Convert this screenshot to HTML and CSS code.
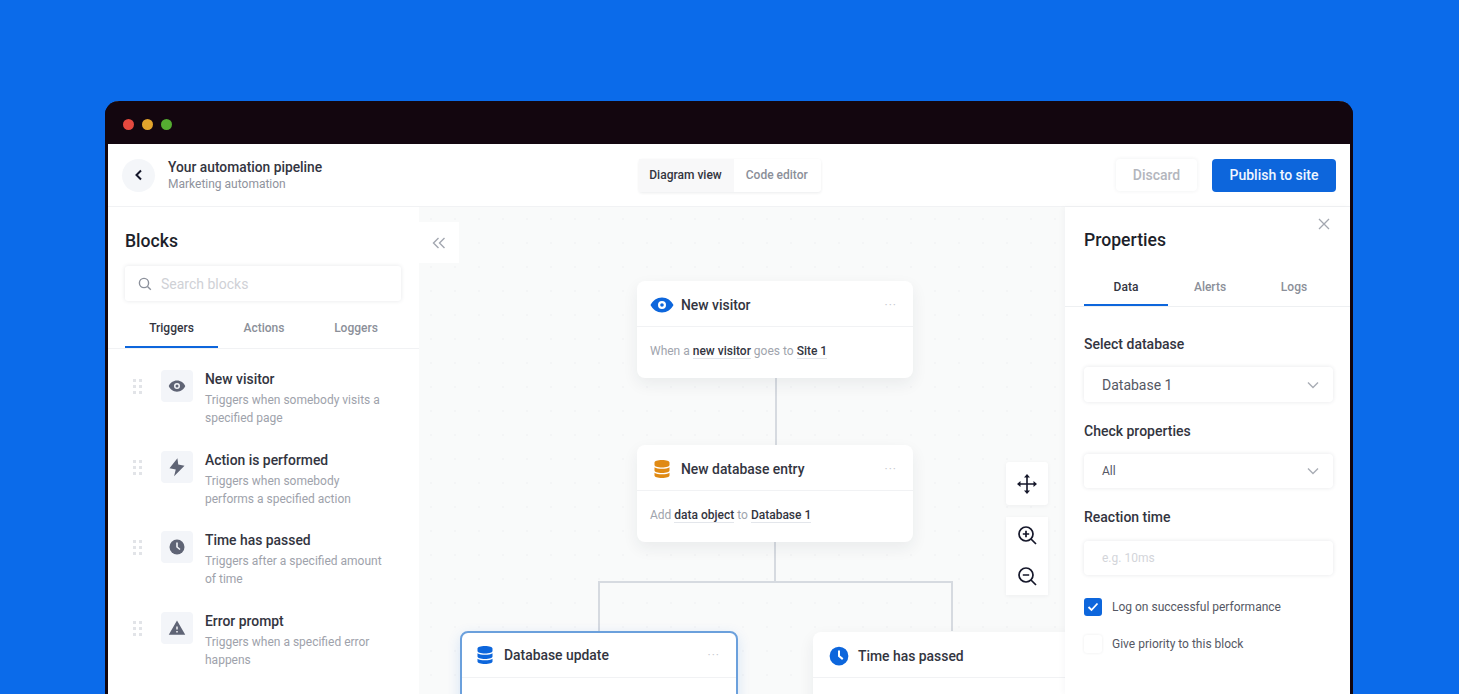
FILE: index.html
```html
<!DOCTYPE html>
<html lang="en">
<head>
    <meta charset="UTF-8">
    <meta name="viewport" content="width=device-width, initial-scale=1.0">
    <title>Your automation pipeline</title>
    <link rel="stylesheet" href="styles.css">
</head>
<body>
    <div class="window">
        <div class="titlebar">
            <span class="light light-red"></span>
            <span class="light light-yellow"></span>
            <span class="light light-green"></span>
        </div>

        <header class="topbar">
            <div class="topbar-left">
                <button class="back-btn" type="button">
                    <svg width="14" height="14" viewBox="0 0 14 14"><path d="M9 2.5 4.5 7 9 11.5" fill="none" stroke="#15172a" stroke-width="2"/></svg>
                </button>
                <div>
                    <div class="pipeline-name">Your automation pipeline</div>
                    <div class="pipeline-sub">Marketing automation</div>
                </div>
            </div>
            <div class="view-switch">
                <span class="view-tab view-tab-active">Diagram view</span>
                <span class="view-tab">Code editor</span>
            </div>
            <div class="topbar-right">
                <button class="btn-discard" type="button">Discard</button>
                <button class="btn-publish" type="button">Publish to site</button>
            </div>
        </header>

        <div class="main">
            <aside class="sidebar">
                <h2 class="panel-title">Blocks</h2>
                <div class="search">
                    <svg width="14" height="14" viewBox="0 0 14 14"><circle cx="6" cy="6" r="4.6" fill="none" stroke="#8b909b" stroke-width="1.4"/><path d="m9.5 9.5 3.3 3.3" stroke="#8b909b" stroke-width="1.4"/></svg>
                    <span>Search blocks</span>
                </div>
                <div class="tabs sidebar-tabs">
                    <span class="tab tab-active">Triggers</span>
                    <span class="tab">Actions</span>
                    <span class="tab">Loggers</span>
                </div>
                <div class="block-list">
                    <div class="block-item">
                        <div class="drag"><i></i><i></i><i></i><i></i><i></i><i></i></div>
                        <div class="block-icon">
                            <svg width="18" height="18" viewBox="0 0 24 24"><path fill-rule="evenodd" fill="#5f6475" d="M12 4.5C7 4.5 2.7 7.6 1 12c1.700 4.400 6 7.500 11 7.500s9.300-3.100 11-7.500c-1.700-4.400-6-7.500-11-7.500zM12 8a4 4 0 1 1 0 8 4 4 0 0 1 0-8zm0 2a2 2 0 1 0 0 4 2 2 0 0 0 0-4z"/></svg>
                        </div>
                        <div>
                            <div class="block-name">New visitor</div>
                            <div class="block-desc">Triggers when somebody visits a specified page</div>
                        </div>
                    </div>
                    <div class="block-item">
                        <div class="drag"><i></i><i></i><i></i><i></i><i></i><i></i></div>
                        <div class="block-icon">
                            <svg width="20" height="20" viewBox="0 0 24 24"><path fill="#5f6475" d="M12.500 1.500 3 13.500l7.500 1.500-2 8L21 10.500 13.500 9z"/></svg>
                        </div>
                        <div>
                            <div class="block-name">Action is performed</div>
                            <div class="block-desc">Triggers when somebody performs a specified action</div>
                        </div>
                    </div>
                    <div class="block-item">
                        <div class="drag"><i></i><i></i><i></i><i></i><i></i><i></i></div>
                        <div class="block-icon">
                            <svg width="16" height="16" viewBox="0 0 16 16"><circle cx="8" cy="8" r="7.500" fill="#5f6475"/><path d="M8 3.500V8l3 2.500" fill="none" stroke="#f3f5f9" stroke-width="1.600"/></svg>
                        </div>
                        <div>
                            <div class="block-name">Time has passed</div>
                            <div class="block-desc">Triggers after a specified amount of time</div>
                        </div>
                    </div>
                    <div class="block-item">
                        <div class="drag"><i></i><i></i><i></i><i></i><i></i><i></i></div>
                        <div class="block-icon">
                            <svg width="18" height="18" viewBox="0 0 24 24"><path fill="#5f6475" d="M1 21h22L12 2 1 21zm12-3h-2v-2h2v2zm0-4h-2v-4h2v4z"/></svg>
                        </div>
                        <div>
                            <div class="block-name">Error prompt</div>
                            <div class="block-desc">Triggers when a specified error happens</div>
                        </div>
                    </div>
                </div>
            </aside>

            <section class="canvas">
                <button class="collapse-btn" type="button">
                    <svg width="14" height="12" viewBox="0 0 14 12"><path d="M6.500 1 1.500 6l5 5M12.500 1l-5 5 5 5" fill="none" stroke="#a3a7b0" stroke-width="1.400"/></svg>
                </button>

                <svg class="wires" width="646" height="487">
                    <path d="M357 170V238M356 335V375M180 424V375H533V424" fill="none" stroke="#d6dae0" stroke-width="2"/>
                </svg>

                <div class="node node-visitor">
                    <div class="node-head">
                        <svg width="24" height="24" viewBox="0 0 24 24"><path fill-rule="evenodd" fill="#0d66dc" d="M12 4.500C7 4.500 2.700 7.600.5 12c2.200 4.400 6.500 7.500 11.500 7.500s9.300-3.100 11.500-7.500C21.300 7.600 17 4.500 12 4.500zM12 8a4 4 0 1 1 0 8 4 4 0 0 1 0-8zm0 2.200a1.800 1.800 0 1 0 0 3.600 1.800 1.800 0 0 0 0-3.600z"/></svg>
                        <span class="node-name">New visitor</span>
                        <span class="node-more">&middot;&middot;&middot;</span>
                    </div>
                    <div class="node-body">When a <b>new visitor</b> goes to <b>Site 1</b></div>
                </div>

                <div class="node node-entry">
                    <div class="node-head">
                        <svg width="24" height="24" viewBox="0 0 24 24"><path fill="#e08a14" d="M12 3c4.400 0 7.500 1.100 7.500 2.600V8c0 1.500-3.100 2.500-7.500 2.500S4.500 9.500 4.500 8V5.600C4.500 4.100 7.600 3 12 3zM4.500 10.300c1.700 1 4.300 1.500 7.500 1.500s5.800-.5 7.500-1.500v3.200c0 1.500-3.100 2.500-7.500 2.500s-7.500-1-7.500-2.500zM4.500 15.800c1.700 1 4.300 1.500 7.500 1.500s5.800-.5 7.500-1.500v2.700c0 1.500-3.100 2.500-7.500 2.500s-7.500-1-7.500-2.500z"/></svg>
                        <span class="node-name">New database entry</span>
                        <span class="node-more">&middot;&middot;&middot;</span>
                    </div>
                    <div class="node-body">Add <b>data object</b> to <b>Database 1</b></div>
                </div>

                <div class="node node-update">
                    <div class="node-head">
                        <svg width="24" height="24" viewBox="0 0 24 24"><path fill="#0d66dc" d="M12 3c4.400 0 7.500 1.100 7.500 2.600V8c0 1.500-3.100 2.500-7.500 2.500S4.500 9.500 4.500 8V5.600C4.500 4.100 7.600 3 12 3zM4.500 10.300c1.700 1 4.300 1.500 7.500 1.500s5.800-.5 7.500-1.500v3.200c0 1.500-3.100 2.500-7.500 2.500s-7.500-1-7.500-2.500zM4.500 15.800c1.700 1 4.300 1.500 7.500 1.500s5.800-.5 7.500-1.500v2.700c0 1.500-3.100 2.500-7.500 2.500s-7.500-1-7.500-2.500z"/></svg>
                        <span class="node-name">Database update</span>
                        <span class="node-more">&middot;&middot;&middot;</span>
                    </div>
                </div>

                <div class="node node-time">
                    <div class="node-head">
                        <svg width="20" height="20" viewBox="0 0 16 16"><circle cx="8" cy="8" r="7.500" fill="#0d66dc"/><path d="M8 3.500V8l3 2.500" fill="none" stroke="#fff" stroke-width="1.600"/></svg>
                        <span class="node-name">Time has passed</span>
                    </div>
                </div>

                <button class="tool-btn tool-move" type="button">
                    <svg width="22" height="22" viewBox="0 0 22 22"><path d="M11 3v16M3 11h16" stroke="#15172a" stroke-width="1.600"/><path fill="#15172a" d="m11 1 3 3.500H8zM11 21l-3-3.500h6zM1 11l3.500-3v6zM21 11l-3.500 3V8z"/></svg>
                </button>
                <div class="tool-group">
                    <button class="tool-btn" type="button">
                        <svg width="22" height="22" viewBox="0 0 22 22"><circle cx="10" cy="10" r="7" fill="none" stroke="#15172a" stroke-width="1.700"/><path d="m15 15 5 5M10 6.800v6.400M6.800 10h6.400" stroke="#15172a" stroke-width="1.700"/></svg>
                    </button>
                    <button class="tool-btn" type="button">
                        <svg width="22" height="22" viewBox="0 0 22 22"><circle cx="10" cy="10" r="7" fill="none" stroke="#15172a" stroke-width="1.700"/><path d="m15 15 5 5M6.800 10h6.400" stroke="#15172a" stroke-width="1.700"/></svg>
                    </button>
                </div>
            </section>

            <aside class="properties">
                <div class="close">
                    <svg width="12" height="12" viewBox="0 0 12 12"><path d="m1 1 10 10M11 1 1 11" stroke="#a3a7b0" stroke-width="1.300"/></svg>
                </div>
                <h2 class="panel-title">Properties</h2>
                <div class="tabs properties-tabs">
                    <span class="tab tab-active">Data</span>
                    <span class="tab">Alerts</span>
                    <span class="tab">Logs</span>
                </div>
                <div class="form">
                    <div class="field-label">Select database</div>
                    <div class="select select-large">
                        <span>Database 1</span>
                        <svg width="12" height="8" viewBox="0 0 12 8"><path d="m1 1.500 5 5 5-5" fill="none" stroke="#a9adb5" stroke-width="1.400"/></svg>
                    </div>
                    <div class="field-label">Check properties</div>
                    <div class="select">
                        <span>All</span>
                        <svg width="12" height="8" viewBox="0 0 12 8"><path d="m1 1.500 5 5 5-5" fill="none" stroke="#a9adb5" stroke-width="1.400"/></svg>
                    </div>
                    <div class="field-label">Reaction time</div>
                    <div class="select placeholder"><span>e.g. 10ms</span></div>
                    <div class="check check-first">
                        <span class="box box-on">
                            <svg width="12" height="10" viewBox="0 0 12 10"><path d="m1.500 5 3 3 6-6.500" fill="none" stroke="#fff" stroke-width="1.800"/></svg>
                        </span>
                        Log on successful performance
                    </div>
                    <div class="check">
                        <span class="box"></span>
                        Give priority to this block
                    </div>
                </div>
            </aside>
        </div>
    </div>
</body>
</html>
```

FILE: styles.css
```css
html, body {
    height: 694px;
    overflow: hidden;
}
body {
    margin: 0;
    background-color: #0b6bea;
    font-family: Roboto, "Liberation Sans", sans-serif;
    color: #1d1f2b;
}
button {
    font-family: inherit;
    border: none;
    padding: 0;
    cursor: pointer;
}
.window {
    width: 1248px;
    height: 593px;
    margin: 101px 0 0 105px;
    box-sizing: border-box;
    border: 3px solid #13060f;
    border-top: none;
    border-bottom: none;
    border-radius: 14px 14px 0 0;
    background-color: #fff;
}

/* title bar */
.titlebar {
    height: 43px;
    box-sizing: border-box;
    margin: 0 -3px;
    padding: 3px 0 0 18px;
    display: flex;
    align-items: center;
    gap: 8px;
    background-color: #13060f;
    border-radius: 14px 14px 0 0;
}
.light {
    width: 11px;
    height: 11px;
    border-radius: 50%;
}
.light-red { background-color: #e5493f; }
.light-yellow { background-color: #e3a42c; }
.light-green { background-color: #55ac31; }

/* top bar */
.topbar {
    height: 62px;
    padding: 0 14px;
    display: grid;
    grid-template-columns: 1fr auto 1fr;
    align-items: center;
    border-bottom: 1px solid #f1f2f4;
}
.topbar-left {
    display: flex;
    align-items: center;
    gap: 13px;
}
.back-btn {
    width: 33px;
    height: 33px;
    border-radius: 50%;
    background-color: #f4f6f9;
    display: flex;
    align-items: center;
    justify-content: center;
}
.pipeline-name {
    font-size: 13.8px;
    font-weight: 500;
    line-height: 18px;
    color: #33353f;
}
.pipeline-sub {
    font-size: 12px;
    line-height: 16px;
    color: #8f939d;
}
.view-switch {
    display: flex;
    height: 33px;
    margin-left: 2px;
    box-shadow: 0 1px 3px rgba(30, 40, 60, 0.09);
    border-radius: 3px;
}
.view-tab {
    padding: 0 13px 0 12px;
    font-size: 12px;
    font-weight: 500;
    line-height: 33px;
    color: #8b8f99;
}
.view-tab-active {
    padding: 0 12px 0 10px;
    background-color: #f8f8f9;
    color: #33353f;
}
.topbar-right {
    display: flex;
    justify-content: flex-end;
    gap: 15px;
}
.btn-discard {
    width: 81px;
    height: 32px;
    background-color: #fff;
    color: #b3b6bd;
    font-size: 14px;
    font-weight: 500;
    border-radius: 4px;
    box-shadow: 0 0 4px rgba(30, 40, 60, 0.07);
}
.btn-publish {
    width: 124px;
    height: 33px;
    background-color: #0d66dc;
    color: #f0f6ff;
    font-size: 14px;
    font-weight: 500;
    border-radius: 4px;
}

/* three columns */
.main {
    display: flex;
    height: 487px;
}
.panel-title {
    margin: 0;
    font-size: 17.6px;
    font-weight: 500;
    line-height: 24px;
}
.tabs {
    display: flex;
}
.tab {
    font-size: 12px;
    font-weight: 500;
    text-align: center;
    color: #8b8f99;
}
.tab-active {
    color: #33353f;
    border-bottom: 2px solid #0d66dc;
}

/* blocks */
.sidebar {
    width: 311px;
    flex-shrink: 0;
    box-sizing: border-box;
    padding-top: 22px;
}
.sidebar .panel-title {
    margin-left: 17px;
}
.search {
    width: 276px;
    height: 35px;
    margin: 13px 0 0 17px;
    box-sizing: border-box;
    padding-left: 13px;
    display: flex;
    align-items: center;
    gap: 9px;
    font-size: 14px;
    color: #cfd1d6;
    border-radius: 3px;
    box-shadow: 0 0 4px rgba(30, 40, 60, 0.11);
}
.sidebar-tabs {
    margin-top: 19px;
    padding-left: 17px;
    border-bottom: 1px solid #f1f2f4;
}
.sidebar-tabs .tab {
    width: 92px;
    line-height: 17px;
    padding-bottom: 9px;
}
.sidebar-tabs .tab-active {
    width: 93px;
}
.block-list {
    padding: 21px 0 0 25px;
}
.block-item {
    display: flex;
    align-items: flex-start;
    height: 80.67px;
}
.drag {
    width: 9px;
    margin: 9px 19px 0 0;
    display: grid;
    grid-template-columns: 3px 3px;
    gap: 3px;
    justify-content: space-between;
}
.drag i {
    height: 3px;
    background-color: #e2e4e8;
}
.block-icon {
    width: 32px;
    height: 32px;
    flex-shrink: 0;
    margin-right: 12px;
    display: flex;
    align-items: center;
    justify-content: center;
    background-color: #f3f5f9;
    border-radius: 4px;
}
.block-name {
    font-size: 13.9px;
    font-weight: 500;
    line-height: 18px;
    color: #33353f;
}
.block-desc {
    width: 180px;
    margin-top: 3px;
    font-size: 12px;
    line-height: 18px;
    color: #9ea2ab;
}

/* diagram */
.canvas {
    position: relative;
    flex: 1;
    overflow: hidden;
    background-color: #f9fafa;
    background-image: radial-gradient(#f4f5f6 1px, transparent 1px);
    background-size: 24px 24px;
}
.collapse-btn {
    position: absolute;
    left: 0;
    top: 15px;
    width: 40px;
    height: 41px;
    background-color: #fff;
    display: flex;
    align-items: center;
    justify-content: center;
}
.wires {
    position: absolute;
    left: 0;
    top: 0;
}
.node {
    position: absolute;
    box-sizing: border-box;
    width: 276px;
    background-color: #fff;
    border-radius: 8px;
    box-shadow: 0 6px 16px rgba(30, 40, 60, 0.07);
}
.node-visitor { left: 218px; top: 74px; }
.node-entry { left: 218px; top: 238px; }
.node-update {
    left: 41px;
    top: 424px;
    width: 278px;
    height: 120px;
    border: 2px solid #6ba0dc;
    box-shadow: 0 4px 14px rgba(13, 102, 220, 0.14);
}
.node-time { left: 394px; top: 425px; height: 120px; }
.node-head {
    height: 46px;
    box-sizing: border-box;
    padding: 3px 16px 0 13px;
    display: flex;
    align-items: center;
    gap: 7px;
    border-bottom: 1px solid #f1f2f4;
}
.node-update .node-head { height: 45px; padding: 0 16px 0 11px; }
.node-time .node-head { padding: 2px 16px 0 16px; gap: 9px; }
.node-name {
    flex: 1;
    font-size: 13.9px;
    font-weight: 500;
    color: #33353f;
}
.node-more {
    font-size: 12px;
    letter-spacing: 1px;
    color: #c9cbd1;
}
.node-body {
    padding: 0 13px;
    height: 51px;
    font-size: 12px;
    line-height: 48px;
    color: #a0a4ad;
}
.node-body b {
    font-weight: 500;
    color: #33353f;
    border-bottom: 1px solid #e3e6eb;
}
.tool-btn {
    width: 42px;
    height: 39px;
    background-color: #fff;
    display: flex;
    align-items: center;
    justify-content: center;
}
.tool-group .tool-btn:first-child {
    padding-bottom: 3px;
}
.tool-move {
    position: absolute;
    left: 587px;
    top: 255px;
    height: 43px;
    border-radius: 3px;
    box-shadow: 0 1px 4px rgba(30, 40, 60, 0.05);
}
.tool-group {
    position: absolute;
    left: 587px;
    top: 310px;
    box-shadow: 0 1px 4px rgba(30, 40, 60, 0.05);
}

/* properties */
.properties {
    position: relative;
    width: 285px;
    flex-shrink: 0;
    box-sizing: border-box;
    padding-top: 21px;
    background-color: #fff;
    box-shadow: -2px 0 6px rgba(30, 40, 60, 0.03);
}
.properties .panel-title {
    margin-left: 19px;
}
.close {
    position: absolute;
    left: 253px;
    top: 11px;
    line-height: 0;
}
.properties-tabs {
    margin-top: 27px;
    padding-left: 19px;
    border-bottom: 1px solid #eef0f2;
}
.properties-tabs .tab {
    width: 84px;
    line-height: 17px;
    padding-bottom: 8px;
}
.form {
    padding: 28px 17px 0 19px;
}
.field-label {
    font-size: 14px;
    font-weight: 500;
    line-height: 18px;
    color: #33353f;
}
.select {
    height: 34px;
    margin: 14px 0 20px;
    box-sizing: border-box;
    padding: 0 14px 0 18px;
    display: flex;
    align-items: center;
    justify-content: space-between;
    font-size: 12px;
    color: #555864;
    border-radius: 4px;
    box-shadow: 0 0 4px rgba(30, 40, 60, 0.11);
}
.select-large {
    height: 35px;
    font-size: 14px;
}
.placeholder {
    margin: 15px 0 0;
    color: #d3d5da;
}
.check {
    height: 18px;
    margin-top: 19px;
    display: flex;
    align-items: center;
    gap: 10px;
    font-size: 12px;
    color: #555864;
}
.check-first {
    margin-top: 23px;
}
.box {
    width: 18px;
    height: 18px;
    box-sizing: border-box;
    border-radius: 3px;
    box-shadow: 0 0 3px rgba(30, 40, 60, 0.09);
    display: flex;
    align-items: center;
    justify-content: center;
}
.box-on {
    background-color: #0d66dc;
    box-shadow: none;
}
```
